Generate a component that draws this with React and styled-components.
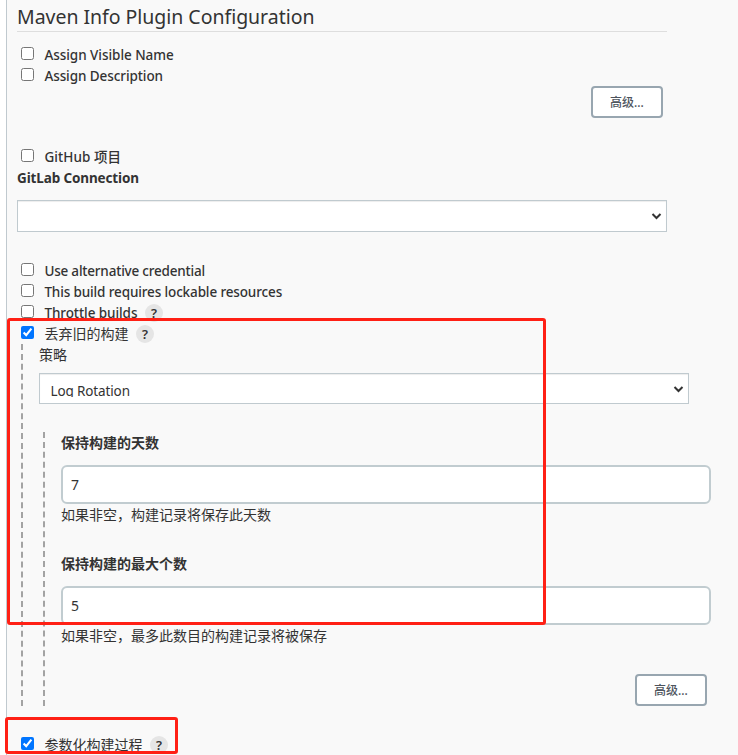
import React from "react";
import styled, { createGlobalStyle } from "styled-components";

const GlobalStyle = createGlobalStyle`
  * { box-sizing: border-box; }
  body {
    margin: 0;
    background: #fff;
    color: #333;
    font: 400 14px/21px "Noto Sans", "Noto Sans CJK SC", sans-serif;
  }
`;

const Page = styled.main`
  position: relative;
  width: 738px;
  height: 755px;
  padding-left: 6px;
  overflow: hidden;
`;

const Panel = styled.form`
  display: flex;
  flex-direction: column;
  height: 755px;
  padding-left: 10px;
  border-left: 1px solid #c0c9cf;
  background: #f9f9f9;

  > * { flex-shrink: 0; }
`;

const Title = styled.h1`
  width: 650px;
  height: 32px;
  margin: 0 0 13px;
  padding-top: 4px;
  border-bottom: 1px solid #dedede;
  font-size: 19.5px;
  font-weight: 450;
  line-height: 26px;
  letter-spacing: -0.03px;
  white-space: nowrap;
`;

const Group = styled.section`
  display: flex;
  flex-direction: column;
  margin-top: ${(p) => p.$top || 0}px;
`;

const OptionRow = styled.label`
  display: flex;
  align-items: flex-start;
  height: 21px;
  padding-left: 4px;
`;

const Checkbox = styled.input`
  flex: none;
  width: 13px;
  height: 13px;
  margin: 2px 10px 0 0;
`;

const Text = styled.span`
  margin-top: ${(p) => (p.$latin ? 0 : -1)}px;
  padding-left: 0.4px;
  font-size: ${(p) => (p.$latin ? 13.5 : 14)}px;
  font-weight: ${(p) => (p.$latin ? 500 : 400)};
  letter-spacing: ${(p) => p.$tracking || 0}px;
  white-space: nowrap;
`;

const Help = styled.span`
  flex: none;
  width: 18px;
  height: 18px;
  margin: 1px 0 0 7.6px;
  border-radius: 50%;
  background: #e5e5e5;
  font-size: 13px;
  font-weight: 600;
  line-height: 18px;
  text-align: center;
`;

const ButtonRow = styled.div`
  display: flex;
  justify-content: flex-end;
  width: 646px;
  margin-top: ${(p) => p.$top}px;
`;

const Button = styled.button`
  width: 72px;
  height: 32px;
  padding: 2px 0 0;
  border: 2px solid #98a6b0;
  border-radius: 4px;
  background: #fff;
  color: #4d545d;
  font: 500 12px/26px "Noto Sans", "Noto Sans CJK SC", sans-serif;
`;

const Caption = styled.div`
  height: 21px;
  margin-top: ${(p) => p.$shift || 0}px;
  font-size: ${(p) => p.$size || 14}px;
  font-weight: ${(p) => p.$weight || 400};
  letter-spacing: ${(p) => p.$tracking || 0}px;
  white-space: nowrap;
`;

const SelectBox = styled.div`
  display: flex;
  align-items: center;
  justify-content: space-between;
  width: 650px;
  height: ${(p) => p.$height}px;
  margin-top: ${(p) => p.$top}px;
  padding: 0 4px 0 10.5px;
  border: 1px solid #c0cacf;
  background: #fff;
  box-shadow: inset 0 1px 1px rgba(0, 0, 0, 0.075);
`;

const SelectValue = styled.span`
  align-self: flex-start;
  height: 16px;
  margin-top: 7px;
  overflow: hidden;
  font-size: 13.5px;
  line-height: 20px;
  letter-spacing: -0.13px;
`;

const Nested = styled.div`
  display: flex;
  flex-direction: column;
  height: ${(p) => p.$height}px;
  margin: ${(p) => p.$margin};
  padding-left: 16px;
  border-left: 2px dashed #a3a3a3;
`;

const Field = styled.input`
  width: 650px;
  height: 39px;
  margin: ${(p) => p.$top}px 0 1px;
  padding: 0 8px;
  border: 2px solid #c1ccd0;
  border-radius: 6px;
  background: #fff;
  color: #333;
  font: inherit;
`;

const Highlight = styled.div`
  position: absolute;
  left: ${(p) => p.$x}px;
  top: ${(p) => p.$y}px;
  width: ${(p) => p.$w}px;
  height: ${(p) => p.$h}px;
  border: 3px solid #ff2015;
  border-radius: 3px;
  pointer-events: none;
`;

function Option({ label, latin, tracking, checked, help }) {
  return (
    <OptionRow>
      <Checkbox type="checkbox" defaultChecked={checked} />
      <Text $latin={latin} $tracking={tracking}>{label}</Text>
      {help && <Help>?</Help>}
    </OptionRow>
  );
}

function Select({ value, height, top }) {
  return (
    <SelectBox $height={height} $top={top}>
      <SelectValue>{value}</SelectValue>
      <svg width="11" height="8" viewBox="0 0 11 8" fill="none" stroke="#333" strokeWidth="2">
        <path d="M1.5 2 5.5 6 9.5 2" />
      </svg>
    </SelectBox>
  );
}

export default function App() {
  return (
    <>
      <GlobalStyle />
      <Page lang="zh-CN">
        <Panel>
          <Title>Maven Info Plugin Configuration</Title>
          <Group>
            <Option label="Assign Visible Name" latin tracking={-0.04} />
            <Option label="Assign Description" latin tracking={-0.08} />
            <ButtonRow $top={-1}><Button type="button">高级...</Button></ButtonRow>
          </Group>
          <Group $top={29}>
            <Option label="GitHub 项目" latin tracking={0.08} />
            <Caption $weight={700} $size={13.5} $tracking={-0.13}>GitLab Connection</Caption>
            <Select height={32} top={11} />
          </Group>
          <Group $top={29}>
            <Option label="Use alternative credential" latin tracking={-0.2} />
            <Option label="This build requires lockable resources" latin tracking={-0.13} />
            <Option label="Throttle builds" latin help tracking={-0.07} />
            <Option label="丢弃旧的构建" checked help />
          </Group>
          <Nested $height={362} $margin="-1px 0 0 4px">
            <Caption>策略</Caption>
            <Select value="Log Rotation" height={31} top={8} />
            <Nested $height={274} $margin="28px 0 0 4px">
              <Caption $weight={700}>保持构建的天数</Caption>
              <Field $top={12} defaultValue="7" />
              <Caption $shift={-1}>如果非空，构建记录将保存此天数</Caption>
              <Group $top={28}>
                <Caption $weight={700}>保持构建的最大个数</Caption>
                <Field $top={12} defaultValue="5" />
                <Caption $shift={-1}>如果非空，最多此数目的构建记录将被保存</Caption>
              </Group>
              <ButtonRow $top={28}><Button type="button">高级...</Button></ButtonRow>
            </Nested>
          </Nested>
          <Group $top={29}>
            <Option label="参数化构建过程" checked help />
          </Group>
        </Panel>
        <Highlight $x={7} $y={318} $w={539} $h={307} />
        <Highlight $x={5} $y={717} $w={173} $h={37} />
      </Page>
    </>
  );
}
